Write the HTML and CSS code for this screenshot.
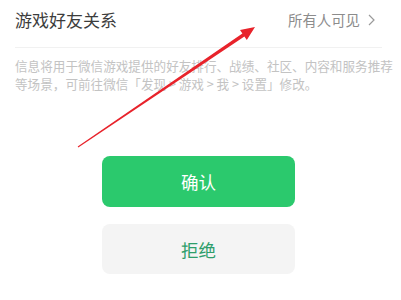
FILE: index.html
```html
<!DOCTYPE html>
<html lang="zh-CN">
<head>
<meta charset="utf-8">
<link rel="stylesheet" href="styles.css">
</head>
<body>
<div class="page">
  <div class="header">
    <div class="title">游戏好友关系</div>
    <div class="visibility">
      <span>所有人可见</span>
      <svg class="chev" width="7" height="12" viewBox="0 0 7 12"><polyline points="1,1 6,6 1,11" fill="none" stroke="#9a9a9a" stroke-width="1.2"/></svg>
    </div>
  </div>
  <p class="desc">信息将用于微信游戏提供的好友排行、战绩、社区、内容和服务推荐<br>等场景，可前往微信「发现 &gt; 游戏 &gt; 我 &gt; 设置」修改。</p>
  <div class="actions">
    <button class="btn primary">确认</button>
    <button class="btn secondary">拒绝</button>
  </div>
  <svg class="arrow" width="401" height="300" viewBox="0 0 401 300">
    <polygon points="78.3,147.4 244.4,36.4 246.8,39.9 255,27 240,29.9 242.4,33.4 77.7,146.6" fill="#e8232b"/>
  </svg>
</div>
</body>
</html>
```

FILE: styles.css
```css
html, body {
  margin: 0;
  padding: 0;
  background: #ffffff;
}
body {
  font-family: "Noto Sans CJK SC", "Noto Sans", sans-serif;
}
.page {
  position: relative;
  width: 401px;
  height: 300px;
  overflow: hidden;
  padding: 0 19px 0 15px;
  box-sizing: border-box;
}
.header {
  display: flex;
  justify-content: space-between;
  align-items: center;
  height: 48px;
  padding: 0 7px 8px 0;
  box-sizing: border-box;
  border-bottom: 1px solid #f1f1f1;
}
.title {
  font-size: 17px;
  line-height: 24px;
  color: #3c3c3c;
}
.visibility {
  display: flex;
  align-items: center;
  gap: 8px;
  font-size: 14.4px;
  line-height: 20px;
  color: #8c8c8c;
}
.chev {
  display: block;
}
.desc {
  margin: 9px 0 0;
  font-size: 12.6px;
  line-height: 18px;
  color: #c3c3c3;
  white-space: nowrap;
}
.actions {
  display: flex;
  flex-direction: column;
  gap: 17px;
  margin: 63px 0 0 87px;
  width: 193px;
}
.btn {
  border: none;
  border-radius: 8px;
  font-family: "Noto Sans CJK SC", sans-serif;
  font-size: 17.5px;
  padding: 0;
  width: 193px;
}
.primary {
  height: 51px;
  background: #2bc96d;
  color: #ffffff;
}
.secondary {
  height: 50px;
  background: #f4f4f4;
  color: #2e9e6b;
}
.arrow {
  position: absolute;
  left: 0;
  top: 0;
  pointer-events: none;
}
```
